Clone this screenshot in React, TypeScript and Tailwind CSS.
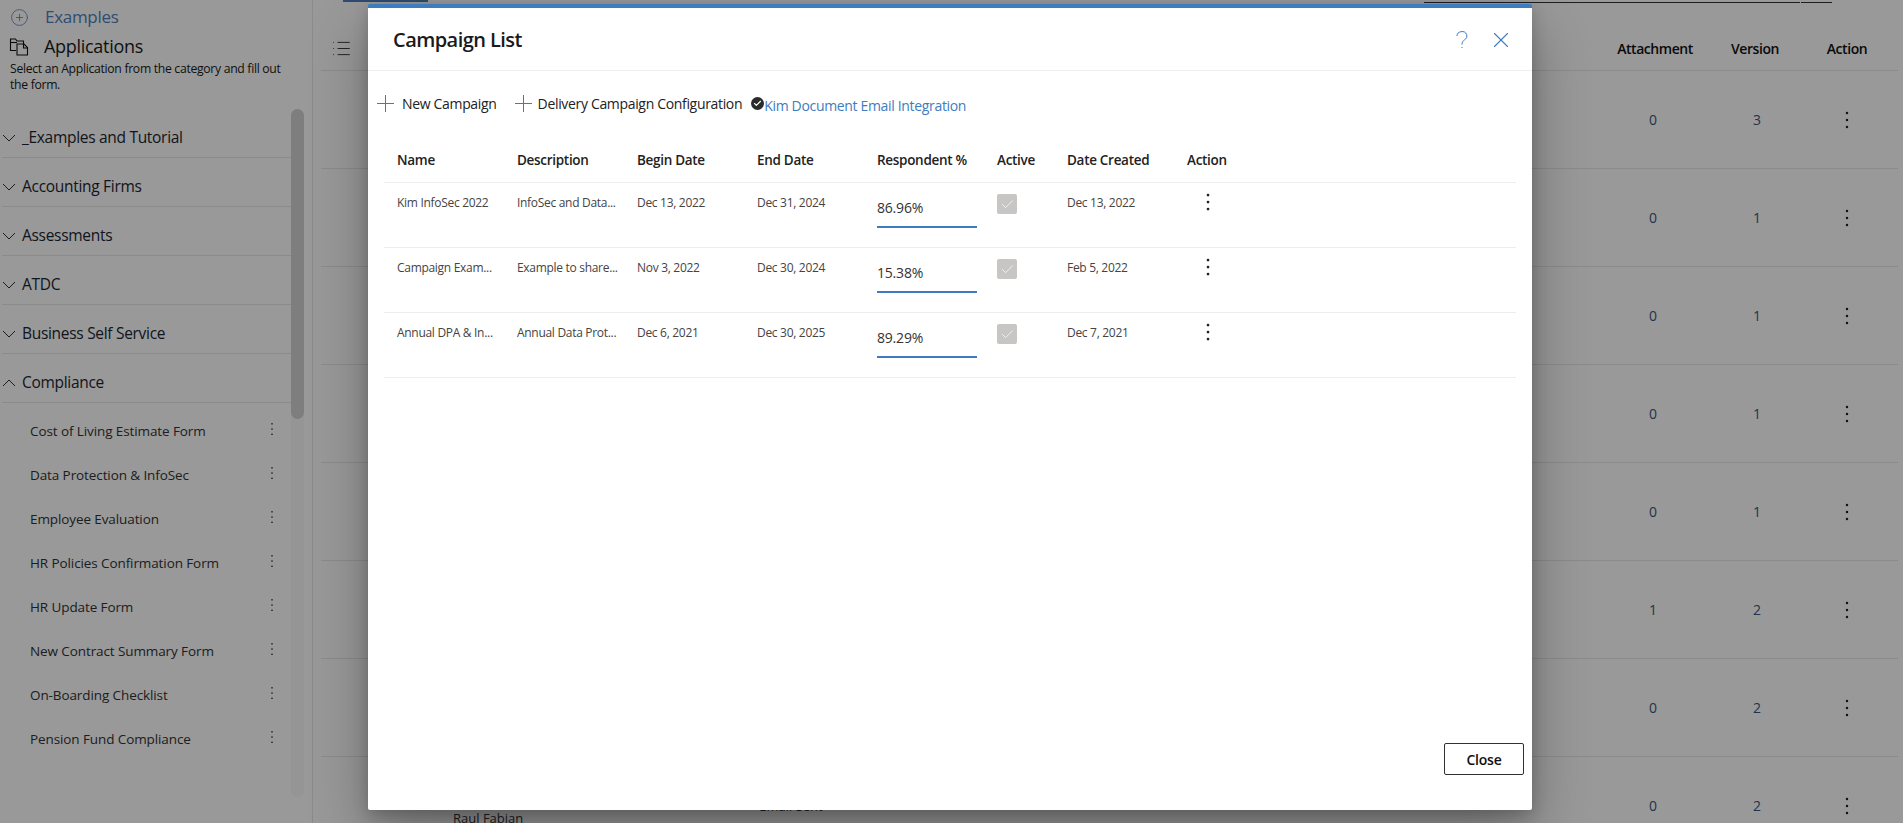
import { CirclePlus, X, List, Check } from "lucide-react";

const cats = ["_Examples and Tutorial", "Accounting Firms", "Assessments", "ATDC", "Business Self Service"];
const items = ["Cost of Living Estimate Form", "Data Protection & InfoSec", "Employee Evaluation", "HR Policies Confirmation Form", "HR Update Form", "New Contract Summary Form", "On-Boarding Checklist", "Pension Fund Compliance"];
const bg = [[0, 3], [0, 1], [0, 1], [0, 1], [0, 1], [1, 2], [0, 2], [0, 2]];
const rows = [
  ["Kim InfoSec 2022", "InfoSec and Data...", "Dec 13, 2022", "Dec 31, 2024", "86.96%", "Dec 13, 2022"],
  ["Campaign Exam...", "Example to share...", "Nov 3, 2022", "Dec 30, 2024", "15.38%", "Feb 5, 2022"],
  ["Annual DPA & In...", "Annual Data Prot...", "Dec 6, 2021", "Dec 30, 2025", "89.29%", "Dec 7, 2021"],
];

function Dots({ className, size = 2 }: { className?: string; size?: number }) {
  return (
    <svg width="6" height="20" viewBox="0 0 6 20" className={className} fill="currentColor">
      <circle cx="3" cy="3" r={size / 1.6} />
      <circle cx="3" cy="10" r={size / 1.6} />
      <circle cx="3" cy="17" r={size / 1.6} />
    </svg>
  );
}

function Chevron({ up }: { up?: boolean }) {
  return (
    <svg width="14" height="8" viewBox="0 0 14 8" fill="none" stroke="#333" strokeWidth="1" className="shrink-0">
      {up ? <path d="M1 7l6-6 6 6" /> : <path d="M1 1l6 6 6-6" />}
    </svg>
  );
}

function PlusIcon({ className }: { className?: string }) {
  return (
    <svg width="17" height="17" viewBox="0 0 17 17" fill="none" stroke="#3d7cbf" strokeWidth="1" className={className}>
      <path d="M8.5 0v17M0 8.5h17" />
    </svg>
  );
}

function AppsIcon() {
  return (
    <svg width="20" height="18" viewBox="0 0 20 18" fill="none" stroke="#111" strokeWidth="1.1" className="shrink-0">
      <path d="M7 12.5H1.5V1h5l1.5 2h6.5v3" />
      <path d="M1.5 4.5H8" />
      <path d="M8 6h7l3.5 3.5V17H8z" />
      <path d="M14.5 6v4h4" />
    </svg>
  );
}

function Sidebar() {
  return (
    <aside className="w-[313px] h-full shrink-0 border-r border-[#e8e8e8] pt-[3px]">
      <div className="flex items-center h-[28px] pl-[10px] gap-[16px] text-[17px] text-[#4f81bd]">
        <CirclePlus size={19} strokeWidth={1} className="shrink-0" />
        <span className="tracking-[-0.3px]">Examples</span>
      </div>
      <div className="flex items-center h-[29px] pt-[2px] pl-[9px] gap-[15px] text-[18px] text-[#1a1a1a]">
        <AppsIcon />
        <span className="tracking-[-0.3px]">Applications</span>
      </div>
      <p className="pl-[10px] pr-[27px] text-[12.2px] leading-[16px] text-[#1a1a1a] tracking-[-0.3px] mt-[1px]">
        Select an Application from the category and fill out the form.
      </p>
      <div className="flex mt-[16px] h-[688px]">
        <div className="w-[289px] ml-[2px]">
          {cats.map((c) => (
            <div key={c} className="h-[49px] pt-[9px] border-b border-[#e8e8e8] flex items-center gap-[6px] text-[15.5px] text-[#1c2530] tracking-[-0.3px]">
              <Chevron />
              <span>{c}</span>
            </div>
          ))}
          <div className="h-[49px] pt-[9px] border-b border-[#e8e8e8] flex items-center gap-[6px] text-[15.5px] text-[#1c2530] tracking-[-0.3px]">
            <Chevron up />
            <span>Compliance</span>
          </div>
          <div className="pt-[6px]">
            {items.map((i) => (
              <div key={i} className="h-[44px] flex items-center justify-between pl-[28px] pr-[16px] text-[13.5px] text-[#333] tracking-[-0.1px]">
                <span>{i}</span>
                <Dots size={1.8} className="text-[#333] -mt-[5px] scale-75" />
              </div>
            ))}
          </div>
        </div>
        <div className="w-[13px] bg-[#f8f8f8] rounded-full">
          <div className="h-[310px] bg-[#d2d2d2] rounded-full" />
        </div>
      </div>
    </aside>
  );
}

function MainArea() {
  return (
    <main className="flex-1 h-full pl-[8px] pr-[5px]">
      <div className="h-[4px] relative overflow-hidden ml-[22px] flex">
        <div className="w-[85px] border-t-2 border-[#4f81bd] text-[13px] leading-[13px] pl-[52px] overflow-hidden">
          <span className="block -mt-[12px]">Catalog</span>
        </div>
        <div className="ml-[996px] mt-[2px] w-[376px] h-[1px] bg-[#333]" />
        <div className="ml-[1px] mt-[2px] w-[31px] h-[1px] bg-[#333]" />
      </div>
      <div className="h-[67px] border-b border-[#e8e8e8] flex items-center pt-[22px] text-[14px] font-semibold text-[#111] tracking-[-0.45px]">
        <List size={21} strokeWidth={1} className="ml-[10px] text-[#222]" />
        <div className="ml-auto flex mr-[9px]">
          <div className="w-[100px] text-center">Attachment</div>
          <div className="w-[100px] text-center">Version</div>
          <div className="w-[84px] text-center">Action</div>
        </div>
      </div>
      {bg.map(([a, v], idx) => (
        <div key={idx} className="h-[98px] border-b border-[#e8e8e8] flex items-center text-[14px] text-[#3f5575]">
          {idx === 7 && (
            <div className="flex text-[13px] text-[#333] ml-[132px] items-center">
              <span className="mt-[26px]">Raul Fabian</span>
              <span className="ml-[236px] mt-[2px]">Email Sent</span>
            </div>
          )}
          <div className="ml-auto flex mr-[9px] items-center">
            <div className="w-[100px] text-center pr-[4px]">{a}</div>
            <div className="w-[100px] text-center pl-[4px]">{v}</div>
            <div className="w-[84px] flex justify-center text-[#222]"><Dots /></div>
          </div>
        </div>
      ))}
    </main>
  );
}

function Modal() {
  const head = ["Name", "Description", "Begin Date", "End Date", "Respondent %"];
  return (
    <div className="absolute left-[368px] top-[4px] w-[1164px] h-[806px] bg-white border-t-4 border-[#3d7cbf] rounded-[2px] shadow-[0_25px_58px_rgba(0,0,0,0.3),0_5px_15px_rgba(0,0,0,0.2)] flex flex-col">
      <div className="h-[63px] border-b border-[#eeeeee] shrink-0 flex items-center pl-[25px] pr-[18px] pt-[2px]">
        <h1 className="text-[20px] font-semibold text-[#1a1a1a] tracking-[-0.55px]">Campaign List</h1>
        <svg width="14" height="18" viewBox="0 0 14 18" fill="none" stroke="#3d7cbf" strokeWidth="1" className="ml-auto">
          <path d="M2 5a5 4.4 0 1 1 7.5 3.8C8 10 7 11 7 13.5M7 16v1" />
        </svg>
        <X size={26} strokeWidth={1} className="ml-[19px] text-[#3d7cbf]" />
      </div>
      <div className="h-[64px] shrink-0 flex items-center pl-[9px] text-[14px] text-[#222] tracking-[-0.33px]">
        <PlusIcon />
        <span className="ml-[8px]">New Campaign</span>
        <PlusIcon className="ml-[18px]" />
        <span className="ml-[6px]">Delivery Campaign Configuration</span>
        <span className="ml-[9px] w-[13px] h-[13px] rounded-full bg-[#2b2b2b] flex items-center justify-center">
          <Check size={9} strokeWidth={3} className="text-white" />
        </span>
        <a className="text-[#3d7cbf] mt-[5px]">Kim Document Email Integration</a>
      </div>
      <div className="mx-[16px] text-[#222]">
        <div className="h-[48px] border-b border-[#eeeeee] flex items-center pl-[13px] pt-[4px] text-[13.5px] font-semibold text-[#222] tracking-[-0.3px]">
          {head.map((h) => (
            <div key={h} className="w-[120px]">{h}</div>
          ))}
          <div className="w-[70px]">Active</div>
          <div className="w-[120px]">Date Created</div>
          <div>Action</div>
        </div>
        {rows.map((r) => (
          <div key={r[0]} className="h-[65px] border-b border-[#eeeeee] flex items-start pl-[13px] text-[12px] leading-[16px] text-[#444] tracking-[-0.3px]">
            <div className="w-[120px] pt-[12px]">{r[0]}</div>
            <div className="w-[120px] pt-[12px]">{r[1]}</div>
            <div className="w-[120px] pt-[12px]">{r[2]}</div>
            <div className="w-[120px] pt-[12px]">{r[3]}</div>
            <div className="w-[120px] pt-[14px]">
              <div className="w-[100px] h-[31px] border-b-2 border-[#3d7cbf] text-[14px] leading-[22px] text-[#333] tracking-[-0.2px]">{r[4]}</div>
            </div>
            <div className="w-[70px] pt-[11px]">
              <span className="w-[20px] h-[20px] bg-[#c8c6c4] rounded-[2px] flex items-center justify-center">
                <Check size={15} strokeWidth={1.2} className="text-white" />
              </span>
            </div>
            <div className="w-[120px] pt-[12px]">{r[5]}</div>
            <div className="w-[42px] flex justify-center pt-[9px] text-[#222]"><Dots size={2.2} /></div>
          </div>
        ))}
      </div>
      <div className="mt-auto flex justify-end pr-[8px] pb-[35px]">
        <button className="w-[80px] h-[32px] border border-[#323130] rounded-[2px] text-[14px] font-semibold text-[#111] tracking-[-0.2px]">Close</button>
      </div>
    </div>
  );
}

export default function App() {
  return (
    <div className="relative h-screen w-full overflow-hidden bg-white font-['Open_Sans',sans-serif]">
      <div className="flex h-full">
        <Sidebar />
        <MainArea />
      </div>
      <div className="absolute inset-0 bg-black/40" />
      <Modal />
    </div>
  );
}
